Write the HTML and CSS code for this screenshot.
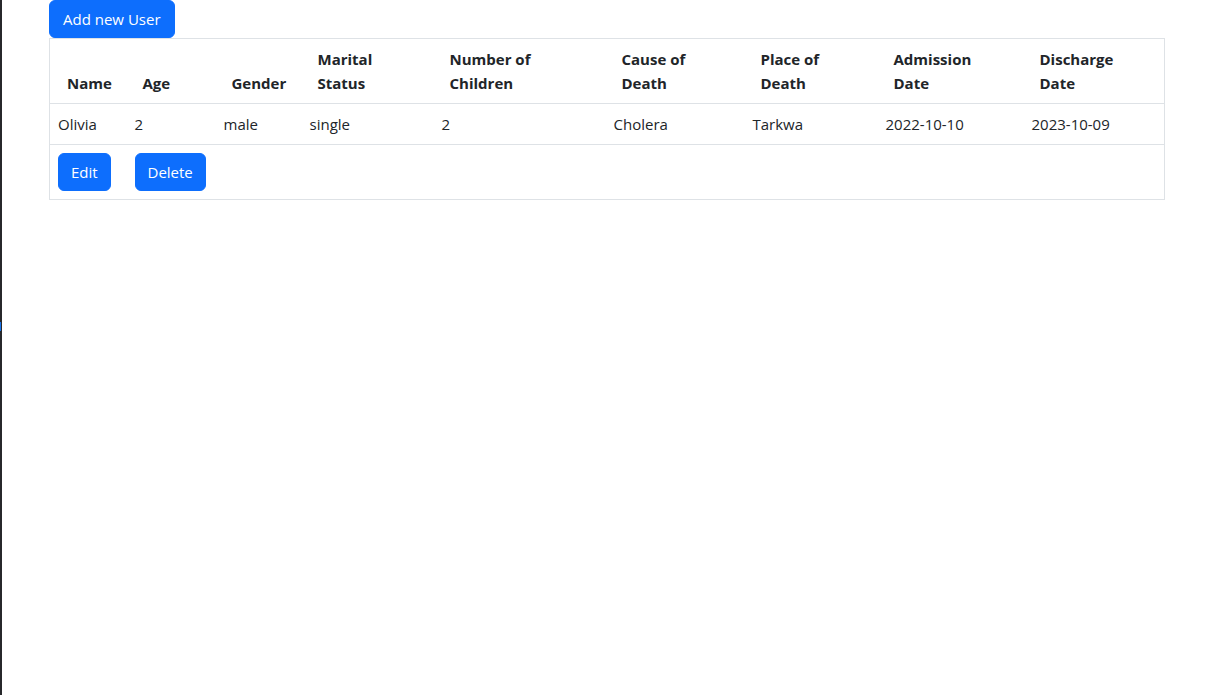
FILE: index.html
```html
<!DOCTYPE html>
<html lang="en">
<head>
<meta charset="utf-8">
<title>Users</title>
<link rel="stylesheet" href="styles.css">
</head>
<body>
<div class="page">
  <div class="edge"><span class="edge-mark"></span></div>
  <main class="content">
    <button class="btn btn-add">Add new User</button>
    <table class="table">
      <colgroup>
        <col class="c1"><col class="c2"><col class="c3"><col class="c4"><col class="c5"><col class="c6"><col class="c7"><col class="c8"><col class="c9">
      </colgroup>
      <thead>
        <tr>
          <th class="th-first">Name</th>
          <th>Age</th>
          <th>Gender</th>
          <th>Marital<br>Status</th>
          <th>Number of<br>Children</th>
          <th>Cause of<br>Death</th>
          <th>Place of<br>Death</th>
          <th>Admission<br>Date</th>
          <th>Discharge<br>Date</th>
        </tr>
      </thead>
      <tbody>
        <tr>
          <td>Olivia</td>
          <td>2</td>
          <td>male</td>
          <td>single</td>
          <td>2</td>
          <td>Cholera</td>
          <td>Tarkwa</td>
          <td>2022-10-10</td>
          <td>2023-10-09</td>
        </tr>
        <tr>
          <td><button class="btn">Edit</button></td>
          <td><button class="btn">Delete</button></td>
          <td></td><td></td><td></td><td></td><td></td><td></td><td></td>
        </tr>
      </tbody>
    </table>
  </main>
</div>
</body>
</html>
```
FILE: styles.css
```css
html, body {
  margin: 0;
  padding: 0;
  background: #fff;
}
body {
  font-family: "Open Sans", "Noto Sans", Arial, sans-serif;
  font-size: 15px;
  line-height: 24px;
  color: #212529;
}
.page {
  display: flex;
  min-height: 695px;
}
.edge {
  width: 2px;
  background: #27282b;
  flex: none;
  display: flex;
  flex-direction: column;
}
.edge-mark {
  display: block;
  margin-top: 322px;
  width: 1px;
  height: 9px;
  background: #1a73e8;
}
.content {
  padding-left: 47px;
  width: 1115px;
}
.btn {
  display: block;
  font-family: inherit;
  font-size: 15px;
  line-height: 24px;
  color: #fff;
  background: #0d6efd;
  border: 1px solid #0d6efd;
  border-radius: 6px;
  padding: 6px 12px;
  height: 38px;
  cursor: pointer;
}
.btn-add {
  padding: 6px 13px;
}
.table {
  width: 1115px;
  table-layout: fixed;
  border-collapse: collapse;
  border: 1px solid #dee2e6;
}
.c1 { width: 77px; }
.c2 { width: 89px; }
.c3 { width: 86px; }
.c4 { width: 132px; }
.c5 { width: 172px; }
.c6 { width: 139px; }
.c7 { width: 133px; }
.c8 { width: 146px; }
.c9 { width: 141px; }
.table th,
.table td {
  padding: 8px;
  text-align: left;
  border-bottom: 1px solid #dee2e6;
}
.table th {
  padding-left: 16px;
  font-weight: 700;
  vertical-align: bottom;
}
.table .th-first {
  padding-left: 17px;
}
.table td {
  vertical-align: top;
}
```
